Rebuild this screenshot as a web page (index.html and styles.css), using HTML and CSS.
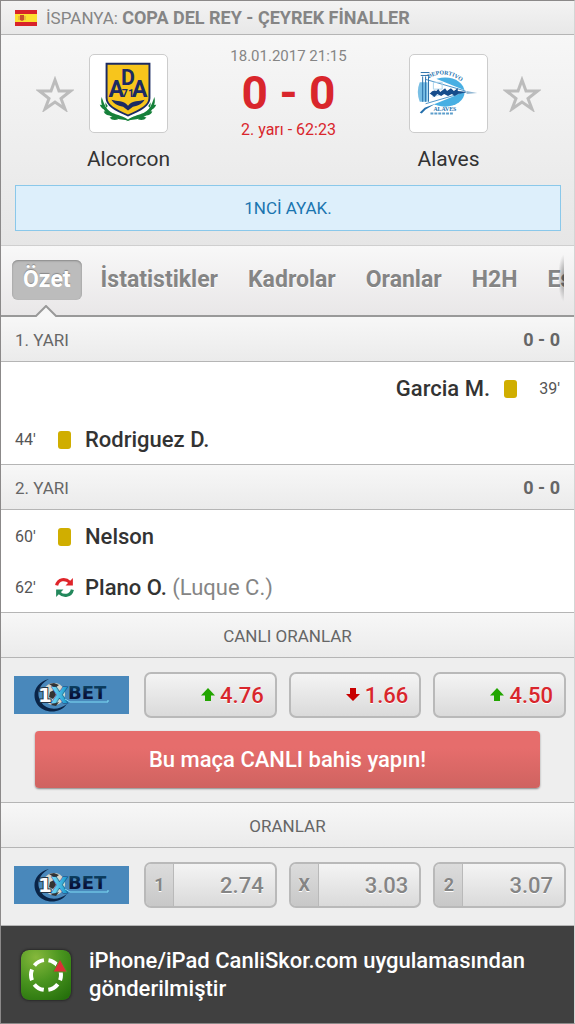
FILE: index.html
```html
<!DOCTYPE html>
<html lang="tr">
<head>
    <meta charset="UTF-8">
    <meta name="viewport" content="width=device-width, initial-scale=1">
    <title>Alcorcon - Alaves</title>
    <link rel="stylesheet" href="styles.css">
</head>
<body>
<svg class="defs" aria-hidden="true">
    <defs>
        <linearGradient id="xblue" x1="0" y1="0" x2="0" y2="1">
            <stop offset="0" stop-color="#0d5876"/>
            <stop offset="0.6" stop-color="#081238"/>
        </linearGradient>
        <linearGradient id="xcyan" x1="0" y1="0" x2="1" y2="0">
            <stop offset="0" stop-color="#7bdcf5"/>
            <stop offset="1" stop-color="#1594cc"/>
        </linearGradient>
        <radialGradient id="green" cx="0.3" cy="0.15" r="1">
            <stop offset="0" stop-color="#86b83c"/>
            <stop offset="0.5" stop-color="#4a951f"/>
            <stop offset="1" stop-color="#26700c"/>
        </radialGradient>
    </defs>
    <symbol id="star" viewBox="0 0 38 36">
        <path d="M19 4l4 11h11.500l-9.500 7.500 4 10.500-10-7-10 7 4-10.500L3.500 15H15z" fill="none" stroke="#bcbcbc" stroke-width="3"/>
    </symbol>
    <symbol id="up" viewBox="0 0 14 14">
        <path d="M7 0l7 7.500h-4V13H4V7.500H0z" fill="#22a500"/>
    </symbol>
    <symbol id="down" viewBox="0 0 14 14">
        <path d="M7 13L0 6h4V0h6v6h4z" fill="#c80000"/>
    </symbol>
    <symbol id="xbet" viewBox="0 0 115 38">
        <rect width="115" height="38" fill="#4988bb"/>
        <circle cx="40" cy="18" r="11" fill="#d8d8cc"/>
        <path d="M35 8l5-1 5 2-4 3zM38 28l7-2-3 4-5-1zM36 16l4-2 2 5-3 4-4-2z" fill="#333"/>
        <path d="M35 3C22 6 17 18 23 28c6 9 22 11 30 0-9 7-21 6-26-2-5-7-3-17 8-23z" fill="#0a2447"/>
        <text x="24" y="26" class="xb xb-one">1</text>
        <text x="37" y="27" class="xb xb-x">X</text>
        <text x="54" y="23" class="xb xb-bet">BET</text>
        <path d="M51 23l5 3h38v-2" fill="none" stroke="#7fdcf5" stroke-width="1"/>
    </symbol>
</svg>

<header class="league">
    <svg class="flag" viewBox="0 0 22 16">
        <rect width="22" height="16" fill="#d8232a"/>
        <rect y="4" width="22" height="8" fill="#fde02f"/>
        <path d="M5 5h4v5l-2 1-2-1z" fill="#c8502c"/>
        <path d="M4 6v4M10 6v4" stroke="#d89a45"/>
    </svg>
    <h1>İSPANYA: <b>COPA DEL REY - ÇEYREK FİNALLER</b></h1>
</header>

<section class="match">
    <div class="teams">
        <button class="fav" aria-label="Alcorcon favori"><svg><use href="#star"/></svg></button>
        <div class="team">
            <div class="badge">
                <svg viewBox="0 0 79 79">
                    <g fill="#16803a">
                        <path d="M12 43c-2 6 1 17 14 22 6 2 11 1 15 3-7-8-19-5-25-15-2-4-3-7-4-10z"/>
                        <path d="M66 43c2 6-1 17-14 22-6 2-11 1-15 3 7-8 19-5 25-15 2-4 3-7 4-10z"/>
                        <path d="M10 51q6 0 8 6-6-1-8-6zM14 58q6-1 9 4-7 1-9-4zM20 64q7-2 9 2-6 2-9-2zM18 46q2 5-1 8-3-4 1-8zM68 51q-6 0-8 6 6-1 8-6zM64 58q-6-1-9 4 7 1 9-4zM58 64q-7-2-9 2 6 2 9-2zM60 46q-2 5 1 8 3-4-1-8z"/>
                    </g>
                    <path d="M15 7h48v37c0 9-10 15-24 21-14-6-24-12-24-21z" fill="#fff"/>
                    <path d="M16 8h46v36c0 8-9 13-23 19-14-6-23-11-23-19z" fill="#1b2a63"/>
                    <path d="M18 10h42v34c0 7-8 11-21 17-13-6-21-10-21-17z" fill="#f7c51c"/>
                    <text x="27" y="43" class="ada ada-a">A</text>
                    <text x="39" y="31" class="ada ada-d">D</text>
                    <text x="51" y="43" class="ada ada-a">A</text>
                    <text x="39" y="43" class="ada ada-n">71</text>
                    <path d="M22 46c6 2 12 0 17 6 5-6 11-4 17-6-2 4-6 6-12 7l-5 4-5-4c-6-1-10-3-12-7z" fill="#1b2a63"/>
                </svg>
            </div>
            <h2>Alcorcon</h2>
        </div>
        <div class="result">
            <time datetime="2017-01-18T21:15">18.01.2017 21:15</time>
            <strong>0 - 0</strong>
            <span>2. yarı - 62:23</span>
        </div>
        <div class="team">
            <div class="badge">
                <svg viewBox="0 0 79 79">
                    <ellipse cx="36" cy="38" rx="20" ry="15" fill="#48afe3"/>
                    <path d="M16 20l42 17-42 17z" fill="#fff"/>
                    <path d="M16 25l41 12M16 50l41-12" stroke="#4b93c7" fill="none"/>
                    <path d="M10 28q-4 10 0 20h8V28z" fill="#78bee4"/>
                    <path d="M11 18h9M11 21h9M13 22v26M16 22v26M19 22v26" stroke="#286fa9" fill="none"/>
                    <path d="M24 28h9v7h-9zM23 43l10-3" stroke="#a9d3eb" fill="none"/>
                    <path d="M20 40q4-5 7-3l2-2 2 3 5-4 2 3 4-3 3 3 4-3v3l10 1-10 2-3 2-3-2-4 2-4-2-3 2-4-2-3 3-4-3z" fill="#164c8b"/>
                    <path d="M58 37l11 2-11 1" fill="#91b7d3"/>
                    <path d="M10 59l5-5 11-4-10 6-4 4z" fill="#246fac"/>
                    <path id="arc" d="M19 24q16-9 32 2" fill="none"/>
                    <text class="ala"><textPath href="#arc">DEPORTIVO</textPath></text>
                    <text x="24" y="57" class="ala">ALAVES</text>
                    <path d="M21 60h23" stroke="#5d9ecb" stroke-width="2" stroke-dasharray="3 1"/>
                </svg>
            </div>
            <h2>Alaves</h2>
        </div>
        <button class="fav" aria-label="Alaves favori"><svg><use href="#star"/></svg></button>
    </div>
    <p class="note">1NCİ AYAK.</p>
</section>

<nav class="tabs">
    <ul>
        <li><a href="#ozet" class="selected">Özet</a></li>
        <li><a href="#istatistikler">İstatistikler</a></li>
        <li><a href="#kadrolar">Kadrolar</a></li>
        <li><a href="#oranlar">Oranlar</a></li>
        <li><a href="#h2h">H2H</a></li>
        <li><a href="#eslesme">Eşleşme</a></li>
    </ul>
    <svg class="caret" viewBox="0 0 22 13"><path d="M0 13v-2L11 1l11 10v2z" fill="#f7f7f7"/><path d="M0 11h1L11 1l10 10h1" fill="none" stroke="#999" stroke-width="2"/></svg>
</nav>

<main>
    <section id="ozet">
        <h3 class="bar"><span>1. YARI</span><b>0 - 0</b></h3>
        <ul class="events">
            <li class="away"><span class="min">39'</span><i class="card"></i><span class="player">Garcia M.</span></li>
            <li><span class="min">44'</span><i class="card"></i><span class="player">Rodriguez D.</span></li>
        </ul>
        <h3 class="bar"><span>2. YARI</span><b>0 - 0</b></h3>
        <ul class="events">
            <li><span class="min">60'</span><i class="card"></i><span class="player">Nelson</span></li>
            <li>
                <span class="min">62'</span>
                <svg class="change" viewBox="0 0 20 20">
                    <path d="M2.500 8C4 1.500 11 1 15 5" fill="none" stroke="#df2429" stroke-width="3"/>
                    <path d="M18 1v7h-7z" fill="#df2429"/>
                    <path d="M17.500 12C16 18.500 9 19 5 15" fill="none" stroke="#23885c" stroke-width="3"/>
                    <path d="M2 19v-7h7z" fill="#23885c"/>
                </svg>
                <span class="player">Plano O. <small>(Luque C.)</small></span>
            </li>
        </ul>
    </section>

    <section class="odds">
        <h3 class="bar center">CANLI ORANLAR</h3>
        <div class="row">
            <svg class="bookie" viewBox="0 0 115 38" role="img" aria-label="1XBET"><use href="#xbet"/></svg>
            <button class="odd live"><svg><use href="#up"/></svg>4.76</button>
            <button class="odd live"><svg><use href="#down"/></svg>1.66</button>
            <button class="odd live"><svg><use href="#up"/></svg>4.50</button>
        </div>
        <a href="#bahis" class="bet">Bu maça CANLI bahis yapın!</a>
    </section>

    <section class="odds" id="oranlar">
        <h3 class="bar center">ORANLAR</h3>
        <div class="row">
            <svg class="bookie" viewBox="0 0 115 38" role="img" aria-label="1XBET"><use href="#xbet"/></svg>
            <button class="odd"><b>1</b>2.74</button>
            <button class="odd"><b>X</b>3.03</button>
            <button class="odd"><b>2</b>3.07</button>
        </div>
    </section>
</main>

<footer>
    <svg class="app" viewBox="0 0 50 50">
        <rect width="50" height="50" rx="8" fill="url(#green)"/>
        <circle cx="25" cy="25" r="15" fill="none" stroke="#fff" stroke-width="4" stroke-dasharray="11 4.700" stroke-dashoffset="-10"/>
        <path d="M39 9l7 13H32z" fill="#dc3037" stroke="#4a951f"/>
    </svg>
    <p>iPhone/iPad CanliSkor.com uygulamasından gönderilmiştir</p>
</footer>
</body>
</html>
```
FILE: styles.css
```css
*{
    box-sizing: border-box;
}
body{
    margin: 0;
    min-height: 100vh;
    display: flex;
    flex-direction: column;
    border: 1px solid #8b8989;
    border-right-color: #d5d5d5;
    background: #eee;
    color: #555;
    font-family: Roboto, "Open Sans", sans-serif;
    font-size: 17px;
    line-height: 24px;
}
h1, h2, h3, p, ul{
    margin: 0;
    padding: 0;
    font-weight: 400;
}
ul{
    list-style: none;
}
a{
    text-decoration: none;
}
button{
    font-family: inherit;
    cursor: pointer;
}
.defs{
    position: absolute;
    width: 0;
    height: 0;
}

.league{
    display: flex;
    align-items: center;
    gap: 9px;
    height: 34px;
    padding: 0 14px;
    border-bottom: 1px solid #b5b5b5;
    background: linear-gradient(#f3f3f3, #e8e8e8);
}
.league h1{
    color: #858585;
    font-size: 17px;
}
.league b{
    font-size: 18px;
    font-weight: 700;
}
.flag{
    width: 22px;
    height: 16px;
}

.match{
    height: 211px;
    padding: 9px 13px 0 14px;
    border-bottom: 1px solid #cfcfcf;
    background: linear-gradient(#f7f7f7, #e6e6e6);
}
.teams{
    display: flex;
    padding: 0 20px 0 21px;
}
.fav{
    width: 38px;
    height: 36px;
    margin-top: 32px;
    padding: 0;
    border: 0;
    background: none;
}
.fav svg{
    display: block;
    width: 38px;
    height: 36px;
}
.team{
    display: flex;
    flex-direction: column;
    align-items: center;
    width: 79px;
    margin: 10px 15px 0;
}
.badge{
    width: 79px;
    height: 79px;
    border: 1px solid #ccc;
    border-radius: 5px;
    background: #fff;
}
.badge svg{
    display: block;
}
.ada{
    fill: #1b2a63;
    font-family: "Liberation Sans Narrow", Roboto, sans-serif;
    font-weight: 700;
    text-anchor: middle;
}
.ada-a{
    font-size: 24px;
}
.ada-d{
    font-size: 22px;
}
.ada-n{
    font-size: 11px;
}
.ala{
    fill: #2572ae;
    font-family: "Liberation Serif", serif;
    font-size: 6px;
    font-weight: 700;
}
.team h2{
    margin-top: 13px;
    color: #333;
    font-size: 21px;
    line-height: 26px;
}
.result{
    flex: 1;
    display: flex;
    flex-direction: column;
    align-items: center;
    white-space: nowrap;
}
.result time{
    color: #858585;
    font-size: 15px;
}
.result strong{
    color: #d9262c;
    font-size: 46px;
    line-height: 50px;
}
.result span{
    color: #d9262c;
    font-size: 16px;
}
.note{
    margin-top: 13px;
    padding: 10px;
    border: 1px solid #8ac8ea;
    background: #ddeffb;
    color: #1a75b0;
    text-align: center;
}

.tabs{
    position: relative;
    height: 71px;
    padding: 14px 10px 0 11px;
    border-bottom: 2px solid #999;
    background: linear-gradient(#f8f8f8, #e9e7e8);
}
.tabs ul{
    display: flex;
    gap: 8px;
    overflow: hidden;
}
/* the list goes on past the right edge */
.tabs::after{
    content: "";
    position: absolute;
    top: 8px;
    right: 10px;
    width: 6px;
    height: 48px;
    background: radial-gradient(ellipse at right, rgba(0,0,0,.4), rgba(0,0,0,0) 70%);
}
.tabs a{
    display: block;
    padding: 0 11px;
    border-radius: 6px;
    color: #858585;
    font-size: 23px;
    font-weight: 700;
    line-height: 40px;
    text-shadow: 0 1px 0 #fff;
}
.tabs .selected{
    background: #bcbcbc;
    box-shadow: inset 0 1px 2px #888;
    color: #fff;
    text-shadow: 0 -1px 1px #888;
}
.caret{
    position: absolute;
    left: 34px;
    bottom: -3px;
    width: 22px;
    height: 13px;
}

.bar{
    display: flex;
    justify-content: space-between;
    padding: 11px 14px 9px;
    border-bottom: 1px solid #b5b5b5;
    background: linear-gradient(#f7f7f7, #ebebeb);
    color: #666;
    font-size: 17px;
}
.bar b{
    font-size: 18px;
    font-weight: 700;
}
.bar.center{
    justify-content: center;
}
.events{
    border-bottom: 1px solid #b5b5b5;
    background: #fff;
}
.events li{
    display: flex;
    align-items: center;
    height: 51px;
    padding: 2px 14px 0;
}
.events .away{
    flex-direction: row-reverse;
}
.min{
    width: 39px;
    color: #555;
    font-size: 16px;
}
.away .min{
    text-align: right;
}
.card{
    width: 13px;
    height: 18px;
    margin: 0 4px;
    border-radius: 3px;
    background: #d0ae00;
}
.change{
    width: 21px;
    height: 21px;
}
.player{
    margin: 0 10px;
    color: #333;
    font-size: 22px;
    font-weight: 500;
}
.player small{
    color: #858585;
    font-size: 22px;
    font-weight: 400;
}

.odds{
    border-bottom: 1px solid #b5b5b5;
}
.row{
    display: flex;
    align-items: center;
    gap: 12px;
    padding: 14px 8px 13px 13px;
}
#oranlar .row{
    padding-bottom: 17px;
}
.bookie{
    flex: none;
    width: 115px;
    height: 38px;
    margin-right: 3px;
}
.xb{
    font-family: "DejaVu Sans", sans-serif;
    font-weight: 700;
}
.xb-one{
    fill: #fff;
    stroke: #234;
    stroke-width: 2px;
    paint-order: stroke;
    font-size: 20px;
}
.xb-x{
    fill: url(#xcyan);
    stroke: #0d4a80;
    stroke-width: 1px;
    paint-order: stroke;
    font-size: 22px;
}
.xb-bet{
    fill: url(#xblue);
    font-size: 18px;
}
.odd{
    flex: 1;
    display: flex;
    align-items: center;
    justify-content: flex-end;
    gap: 5px;
    height: 46px;
    padding: 0 11px 0 0;
    border: 2px solid #b9b9b9;
    border-radius: 7px;
    background: linear-gradient(#f4f4f4, #dadada);
    color: #858585;
    font-size: 22px;
    font-weight: 500;
    text-shadow: 0 1px 0 #fff;
    overflow: hidden;
}
.odd.live{
    color: #d9262c;
}
.odd svg{
    width: 14px;
    height: 14px;
}
.odd b{
    width: 28px;
    margin-right: auto;
    border-right: 1px solid #b9b9b9;
    background: linear-gradient(#dcdcdc, #c8c8c8);
    font-size: 18px;
    font-weight: 700;
    line-height: 42px;
    text-align: center;
}
.bet{
    display: block;
    margin: 0 34px 14px;
    border-radius: 4px;
    background: linear-gradient(#e66d6c 30%, #cf6360);
    box-shadow: 0 1px 2px #888;
    color: #fff;
    font-size: 22px;
    font-weight: 500;
    line-height: 57px;
    text-align: center;
}

footer{
    flex: 1;
    display: flex;
    align-items: center;
    gap: 18px;
    padding: 0 20px;
    background: #404040;
    color: #fff;
}
footer p{
    font-size: 22px;
    font-weight: 500;
    line-height: 28px;
    max-width: 450px;
}
.app{
    flex: none;
    width: 50px;
    height: 50px;
    border-radius: 8px;
    box-shadow: 0 0 3px #111;
}
```
